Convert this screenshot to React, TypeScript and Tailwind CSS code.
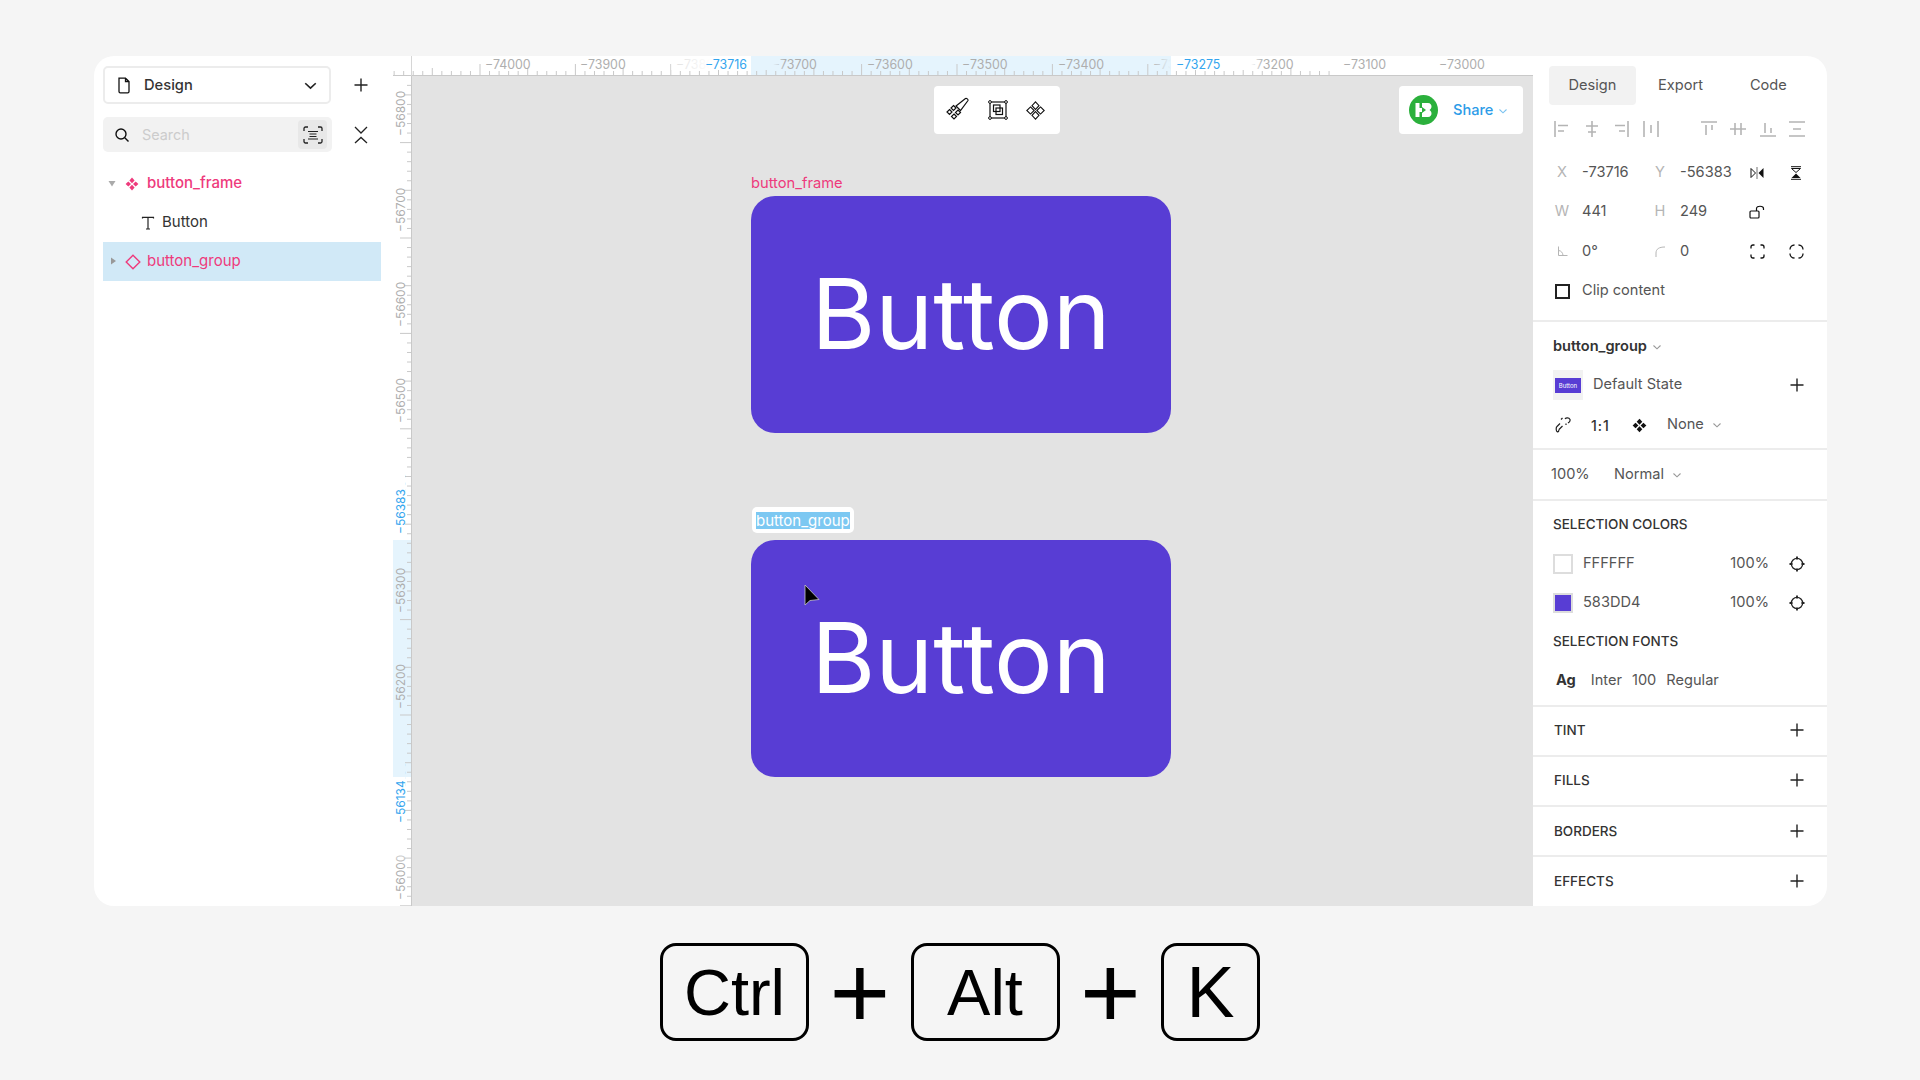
import React from "react";

const PINK = "#ee3a7c";

function Plus() {
  return (
    <svg width="14" height="14" viewBox="0 0 14 14" className="block">
      <path d="M7 0.5V13.5M0.5 7H13.5" stroke="#222" strokeWidth="1.4" />
    </svg>
  );
}
function Chevron({ size = 10, color = "#999" }: { size?: number; color?: string }) {
  return (
    <svg width={size} height={size} viewBox="0 0 10 10" className="block">
      <path d="M1.5 3.5L5 6.8L8.5 3.5" fill="none" stroke={color} strokeWidth="1.1" />
    </svg>
  );
}
function Diamonds({ size = 14, fill = "#111", hollow = false }: { size?: number; fill?: string; hollow?: boolean }) {
  const d = ["M7 0.6L9.6 3.5L7 6.2L4.4 3.5Z", "M7 7.8L9.6 10.5L7 13.4L4.4 10.5Z", "M3.3 4.4L6 7L3.3 9.6L0.6 7Z", "M10.7 4.4L13.4 7L10.7 9.6L8 7Z"];
  return (
    <svg width={size} height={size} viewBox="0 0 14 14" className="block">
      {d.map((p) => (
        <path key={p} d={p} fill={hollow ? "none" : fill} stroke={hollow ? fill : "none"} strokeWidth="0.8" />
      ))}
    </svg>
  );
}
function Target() {
  return (
    <svg width="16" height="16" viewBox="0 0 16 16" className="block">
      <circle cx="8" cy="8" r="5.6" fill="none" stroke="#222" strokeWidth="1.3" />
      <path d="M8 0.5V3.5M8 12.5V15.5M0.5 8H3.5M12.5 8H15.5" stroke="#222" strokeWidth="1.8" />
    </svg>
  );
}
function AlignIcon({ d }: { d: string }) {
  return (
    <svg width="18" height="18" viewBox="0 0 18 18" className="block">
      <path d={d} fill="none" stroke="#b4b4b4" strokeWidth="1.6" />
    </svg>
  );
}

const alignIcons = [
  { c: 1562, d: "M2 1V17M5 5.5H15M5 11H11" },
  { c: 1592, d: "M9 1V17M3 6H15M5 12H13" },
  { c: 1621, d: "M16 1V17M3 5.5H13M7 11H13" },
  { c: 1650, d: "M2 1V17M16 1V17M9 5V13" },
  { c: 1708, d: "M1 2H17M6 5V15M12 5V10" },
  { c: 1738, d: "M1 9H17M6 3V15M12 3V15" },
  { c: 1767, d: "M1 16H17M6 3V13M12 8V13" },
  { c: 1796, d: "M1 2H17M1 16H17M5 9H13" },
];

function TopRuler() {
  const ticks: React.ReactNode[] = [];
  const base = 480 - 412 + 19;
  for (let i = -9; i < 90; i++) {
    const x = base + i * 9.54;
    if (x < 0 || x > 1140) continue;
    const h = i % 10 === 0 ? 12 : i % 5 === 0 ? 8 : 5;
    ticks.push(<line key={i} x1={x} x2={x} y1={20 - h} y2={20} stroke="#c9c9c9" strokeWidth="1" />);
  }
  const labels = [
    [-74000, 485], [-73900, 580], [-73800, 676], [-73700, 772], [-73600, 867], [-73500, 962],
    [-73400, 1058], [-73300, 1153], [-73200, 1248], [-73100, 1343], [-73000, 1439],
  ];
  return (
    <svg width="1140" height="20" className="block">
      <defs>
        <linearGradient id="gw1" x1="0" x2="1" y1="0" y2="0">
          <stop offset="0" stopColor="#fff" stopOpacity="0.6" />
          <stop offset="0.5" stopColor="#fff" stopOpacity="1" />
        </linearGradient>
        <linearGradient id="gw2" x1="0" x2="1" y1="0" y2="0">
          <stop offset="0" stopColor="#fff" stopOpacity="1" />
          <stop offset="1" stopColor="#fff" stopOpacity="0" />
        </linearGradient>
        <linearGradient id="gb1" x1="0" x2="1" y1="0" y2="0">
          <stop offset="0" stopColor="#e5f4fd" stopOpacity="1" />
          <stop offset="1" stopColor="#e5f4fd" stopOpacity="0" />
        </linearGradient>
        <linearGradient id="gb2" x1="0" x2="1" y1="0" y2="0">
          <stop offset="0" stopColor="#e5f4fd" stopOpacity="0" />
          <stop offset="1" stopColor="#e5f4fd" stopOpacity="1" />
        </linearGradient>
      </defs>
      <rect x={751 - 393} y="0" width="420" height="19" fill="#e5f4fd" />
      {ticks}
      <g fontSize="12.4" fill="#aeaeae">
        {labels.map(([v, x]) => (
          <text key={v} x={x - 393} y="12.5">
            {"\u2212" + String(-v)}
          </text>
        ))}
      </g>
      <rect x={671 - 393} y="0" width="80" height="14" fill="url(#gw1)" />
      <rect x={751 - 393} y="0" width="22" height="14" fill="#e5f4fd" />
      <rect x={773 - 393} y="0" width="12" height="14" fill="url(#gb1)" />
      <rect x={1150 - 393} y="0" width="21" height="14" fill="url(#gb2)" />
      <rect x={1171 - 393} y="0" width="80" height="14" fill="#fff" />
      <rect x={1251 - 393} y="0" width="12" height="14" fill="url(#gw2)" />
      <g fontSize="12.4" fill="#33a5ee">
        <text x={747 - 393} y="12.5" textAnchor="end">{"\u221273716"}</text>
        <text x={1176 - 393} y="12.5">{"\u221273275"}</text>
      </g>
      <line x1="0" x2="1140" y1="19.5" y2="19.5" stroke="#c9c9c9" />
      <line x1="18.5" x2="18.5" y1="0" y2="20" stroke="#d6d6d6" />
    </svg>
  );
}

function LeftRuler() {
  const ticks: React.ReactNode[] = [];
  const top = 76;
  for (let i = -7; i < 85; i++) {
    const y = 142.6 + i * 9.54 - top;
    if (y < 0 || y > 830) continue;
    const w = i % 10 === 0 ? 12 : i % 5 === 0 ? 8 : 5;
    ticks.push(<line key={i} x1={19 - w} x2={19} y1={y} y2={y} stroke="#c9c9c9" />);
  }
  const labels = [[56800, 136], [56700, 232], [56600, 327], [56500, 423], [56400, 518], [56300, 613], [56200, 709], [56100, 804], [56000, 900]];
  return (
    <svg width="19" height="830" className="block">
      <defs>
        <linearGradient id="gv" x1="0" x2="0" y1="0" y2="1">
          <stop offset="0" stopColor="#fff" stopOpacity="1" />
          <stop offset="1" stopColor="#fff" stopOpacity="0" />
        </linearGradient>
      </defs>
      <rect x="0" y={540 - top} width="18" height="237" fill="#e5f4fd" />
      {ticks}
      <g fontSize="12" fill="#aeaeae">
        {labels.map(([v, y]) => (
          <text key={v} transform={`translate(11.5 ${y - top}) rotate(-90)`}>
            {"\u2212" + v}
          </text>
        ))}
      </g>
      <rect x="0" y={468 - top} width="12" height={72} fill="#fff" />
      <rect x="0" y={777 - top} width="12" height={63} fill="#fff" />
      <rect x="0" y={840 - top} width="12" height={26} fill="url(#gv)" />
      <rect x="0" y={540 - top} width="12" height={10} fill="#e5f4fd" />
      <rect x="0" y={760 - top} width="12" height={17} fill="#e5f4fd" />
      <g fontSize="12" fill="#33a5ee">
        <text transform={`translate(11.5 ${534 - top}) rotate(-90)`}>{"\u221256383"}</text>
        <text transform={`translate(11.5 ${823 - top}) rotate(-90)`}>{"\u221256134"}</text>
      </g>
      <line x1="18.5" x2="18.5" y1="0" y2="830" stroke="#c9c9c9" />
    </svg>
  );
}

function PurpleButton() {
  return (
    <div className="w-[420px] h-[237px] rounded-[24px] bg-[#583dd4] flex items-center justify-center pb-[2px] text-white text-[98px] leading-none">
      Button
    </div>
  );
}

function Section({ label, extra }: { label: string; extra: string }) {
  return (
    <div className={`${extra} h-[50px] shrink-0 flex items-center justify-between pl-[21px] pr-[23px] border-t-2 border-[#ececec]`}>
      <span className="text-[13.5px] font-medium text-[#333]">{label}</span>
      <Plus />
    </div>
  );
}

function Key({ w, size, children }: { w: string; size: string; children: string }) {
  return (
    <div className={`${w} ${size} h-[98px] border-[3px] border-black rounded-[16px] flex items-center justify-center text-black leading-none`}>
      {children}
    </div>
  );
}

export default function App() {
  return (
    <div className="w-[1920px] h-[1080px] bg-[#f5f5f5] pt-[56px] pl-[94px] overflow-hidden [font-family:Inter,sans-serif]">
      <div className="w-[1733px] h-[850px] rounded-[20px] bg-white flex overflow-hidden">
        {/* Left panel */}
        <div className="w-[299px] shrink-0 pl-[9px] pt-[10px] flex flex-col">
          <div className="flex items-center">
            <div className="w-[228px] h-[38px] border-2 border-[#ececec] rounded-[5px] flex items-center pl-[11px] pr-[11px]">
              <svg width="16" height="17" viewBox="0 0 16 17" className="block shrink-0">
                <path d="M3 1.2H9.5L13 4.5V14.5C13 15.3 12.4 15.8 11.7 15.8H4.3C3.6 15.8 3 15.3 3 14.5Z M9.5 1.2V4.5H13" fill="none" stroke="#111" strokeWidth="1.3" />
              </svg>
              <span className="ml-[12px] text-[14.7px] font-medium text-[#333] flex-1">Design</span>
              <Chevron size={15} color="#222" />
            </div>
            <div className="ml-[23px]"><Plus /></div>
          </div>
          <div className="flex items-center mt-[13px]">
            <div className="w-[229px] h-[35px] bg-[#f2f2f2] rounded-[5px] flex items-center pl-[11px] pr-[5px]">
              <svg width="16" height="16" viewBox="0 0 16 16" className="block shrink-0">
                <circle cx="7" cy="7" r="5" fill="none" stroke="#111" strokeWidth="1.4" />
                <path d="M10.8 10.8L14.5 14.5" stroke="#111" strokeWidth="1.4" />
              </svg>
              <span className="ml-[12px] text-[14.4px] text-[#cccccc] flex-1">Search</span>
              <div className="w-[29px] h-[29px] bg-[#e8e8e8] rounded-[4px] flex items-center justify-center">
                <svg width="20" height="18" viewBox="0 0 20 18" className="block">
                  <path d="M1 5V2.5C1 1.7 1.7 1 2.5 1H5M15 1H17.5C18.3 1 19 1.7 19 2.5V5M19 13V15.5C19 16.3 18.3 17 17.5 17H15M5 17H2.5C1.7 17 1 16.3 1 15.5V13" fill="none" stroke="#222" strokeWidth="1.3" />
                  <path d="M5 5.5H15M6.5 8H13.5M6.5 10.5H13.5M5 13H15" stroke="#222" strokeWidth="1.2" />
                </svg>
              </div>
            </div>
            <div className="ml-[22px]">
              <svg width="14" height="18" viewBox="0 0 14 18" className="block">
                <path d="M1 1L7 7L13 1M1 17L7 11.5L13 17" fill="none" stroke="#222" strokeWidth="1.3" />
              </svg>
            </div>
          </div>
          <div className="w-[278px] mt-[12px] text-[15px]">
            <div className="h-[39px] flex items-center">
              <svg width="10" height="8" viewBox="0 0 10 8" className="block ml-[5px]"><path d="M0.5 1H7.5L4 6.5Z" fill="#aaaaaa" /></svg>
              <div className="ml-[7px]"><Diamonds size={14} fill={PINK} /></div>
              <span className="ml-[8px] font-medium text-[#ee3a7c]">button_frame</span>
            </div>
            <div className="h-[39px] flex items-center pl-[38px]">
              <svg width="14" height="14" viewBox="0 0 14 14" className="block"><path d="M1.5 2.5V1.3H12.5V2.5M7 1.3V13M5 13H9" fill="none" stroke="#222" strokeWidth="1.2" /></svg>
              <span className="ml-[7px] text-[#333]">Button</span>
            </div>
            <div className="h-[39px] flex items-center bg-[#d1e9f7]">
              <svg width="7" height="10" viewBox="0 0 7 10" className="block ml-[7px]"><path d="M1 0.5V7.5L6 4Z" fill="#999" /></svg>
              <div className="ml-[8px]">
                <svg width="16" height="16" viewBox="0 0 16 16" className="block"><path d="M8 1.2L14.8 8L8 14.8L1.2 8Z" fill="none" stroke={PINK} strokeWidth="1.4" /></svg>
              </div>
              <span className="ml-[6px] text-[#ee3a7c]">button_group</span>
            </div>
          </div>
        </div>

        {/* Rulers + canvas */}
        <div className="w-[1140px] shrink-0 flex flex-col">
          <TopRuler />
          <div className="flex flex-1 min-h-0">
            <LeftRuler />
            <div className="relative flex-1 bg-[#e3e3e3]">
              <div className="absolute left-[522px] top-[10px] w-[126px] h-[48px] bg-white rounded-[4px] flex items-center pl-[12px] gap-[18px]">
                <svg width="24" height="26" viewBox="0 0 24 26" className="block shrink-0">
                  <g fill="none" stroke="#111" strokeWidth="1.2">
                    <path d="M3.5 12.5L6 15L3.5 17.5L1 15Z M8 17L10.5 19.5L8 22L5.5 19.5Z M7.5 8.5L10 11L7.5 13.5L5 11Z M12 13L14.5 15.5L12 18L9.5 15.5Z" />
                    <path d="M10 9L19.5 1.5C20.5 0.8 22.5 2.5 22 3.5L14.5 13.5Z" />
                  </g>
                </svg>
                <svg width="20" height="20" viewBox="0 0 20 20" className="block shrink-0">
                  <g fill="none" stroke="#111" strokeWidth="1.2">
                    <rect x="2" y="2" width="16" height="16" />
                    <rect x="5.5" y="5" width="6.5" height="6.5" />
                    <rect x="8" y="8" width="6.5" height="6.5" />
                  </g>
                  <g fill="#fff" stroke="#111">
                    <circle cx="2" cy="2" r="1.4" /><circle cx="18" cy="2" r="1.4" /><circle cx="2" cy="18" r="1.4" /><circle cx="18" cy="18" r="1.4" />
                  </g>
                </svg>
                <Diamonds size={19} hollow />
              </div>
              <div className="absolute left-[987px] top-[10px] w-[124px] h-[48px] bg-white rounded-[4px] flex items-center pl-[10px]">
                <svg width="29" height="30" viewBox="0 0 29 30" className="block shrink-0">
                  <ellipse cx="14.5" cy="15" rx="14.5" ry="15" fill="#2bb03c" />
                  <path d="M6.5 8H19C21.5 8 22.5 10 22.5 11.5C22.5 13 21.8 14.2 20.5 15C21.8 15.8 22.5 17 22.5 18.5C22.5 20 21.5 22 19 22H6.5Z" fill="#fff" />
                  <path d="M13 12L17 15L13 18Z" fill="#2bb03c" />
                  <rect x="10.5" y="8" width="2.5" height="5" fill="#2bb03c" />
                  <rect x="10.5" y="17" width="2.5" height="5" fill="#2bb03c" />
                </svg>
                <span className="ml-[15px] pt-[1px] text-[14.6px] font-medium text-[#2d9ce8]">Share</span>
                <span className="ml-[5px] pt-[1px]"><Chevron color="#7cc3f0" /></span>
              </div>

              <div className="absolute left-[339px] top-[97px] text-[14.7px] leading-[20px] text-[#ee3a7c]">button_frame</div>
              <div className="absolute left-[339px] top-[120px]"><PurpleButton /></div>

              <div className="absolute left-[340px] top-[431px] h-[26px] px-[4px] bg-white rounded-[5px] flex items-center text-[15px] text-white">
                <span className="bg-[#7cc8f2] leading-[17px]">button_group</span>
              </div>
              <div className="absolute left-[339px] top-[464px]"><PurpleButton /></div>

              <svg width="16" height="24" viewBox="0 0 16 24" className="absolute left-[392px] top-[508px]">
                <path d="M1 1V21L6 16.5L15 15.5Z" fill="#000" stroke="#c8c8c8" strokeWidth="0.8" />
              </svg>
            </div>
          </div>
        </div>

        {/* Right panel */}
        <div className="w-[294px] shrink-0 flex flex-col text-[14.6px] text-[#555]">
          <div className="h-[264px] shrink-0 pt-[10px] pl-[16px]">
            <div className="flex items-center h-[39px]">
              <div className="w-[87px] h-[39px] rounded-[4px] bg-[#f2f2f2] flex items-center justify-center">Design</div>
              <span className="ml-[22px]">Export</span>
              <span className="ml-[47px]">Code</span>
            </div>
            <div className="flex items-center h-[18px] mt-[15px] ml-[4px]">
              {alignIcons.map((a, i) => (
                <div key={a.c} className={i === 4 ? "ml-[40px]" : i === 0 ? "" : "ml-[11.5px]"}>
                  <AlignIcon d={a.d} />
                </div>
              ))}
            </div>
            <div className="flex items-center h-[39px] mt-[15px]">
              <span className="w-[26px] mr-[7px] text-center text-[#b5b5b5]">X</span>
              <span className="w-[66px]">-73716</span>
              <span className="w-[24px] mr-[8px] text-center text-[#b5b5b5]">Y</span>
              <span className="w-[62px]">-56383</span>
              <span className="w-[30px] flex justify-center">
                <svg width="14" height="12" viewBox="0 0 14 12" className="block"><path d="M1 1.5V10.5L5.5 6Z" fill="none" stroke="#111" /><path d="M13.5 1V11L8.5 6Z" fill="#111" /><path d="M7 0V12" stroke="#111" strokeWidth="0.6" /></svg>
              </span>
              <span className="w-[30px] ml-[9px] flex justify-center">
                <svg width="12" height="14" viewBox="0 0 12 14" className="block"><path d="M1 0.7H11M1 13.3H11" stroke="#111" /><path d="M1.5 2.5H10.5L6 6.5Z" fill="none" stroke="#111" /><path d="M1.5 12H10.5L6 7.5Z" fill="#111" /></svg>
              </span>
            </div>
            <div className="flex items-center h-[39px] pt-[1px]">
              <span className="w-[26px] mr-[7px] text-center text-[#b5b5b5]">W</span>
              <span className="w-[66px]">441</span>
              <span className="w-[24px] mr-[8px] text-center text-[#b5b5b5]">H</span>
              <span className="w-[62px]">249</span>
              <span className="w-[30px] flex justify-center">
                <svg width="16" height="14" viewBox="0 0 16 14" className="block"><rect x="1" y="6" width="9" height="7" rx="1" fill="none" stroke="#111" strokeWidth="1.2" /><path d="M7.5 6V3.5C7.5 0.5 14.5 0.5 14.5 3.5V5" fill="none" stroke="#111" strokeWidth="1.2" /></svg>
              </span>
            </div>
            <div className="flex items-center h-[39px] pt-[2px]">
              <span className="w-[26px] mr-[7px] flex justify-center">
                <svg width="11" height="11" viewBox="0 0 11 11" className="block"><path d="M1.5 0.5V9.5H10.5M1.5 4.5C4 4.5 6 7 6 9.5" fill="none" stroke="#b5b5b5" /></svg>
              </span>
              <span className="w-[66px]">0°</span>
              <span className="w-[24px] mr-[8px] flex justify-center">
                <svg width="11" height="11" viewBox="0 0 11 11" className="block"><path d="M1 11V7C1 3 4 1 10 1" fill="none" stroke="#b5b5b5" /></svg>
              </span>
              <span className="w-[62px]">0</span>
              <span className="w-[30px] flex justify-center">
                <svg width="15" height="15" viewBox="0 0 15 15" className="block"><path d="M1 4.5V3C1 1.8 1.8 1 3 1H4.5M10.5 1H12C13.2 1 14 1.8 14 3V4.5M14 10.5V12C14 13.2 13.2 14 12 14H10.5M4.5 14H3C1.8 14 1 13.2 1 12V10.5" fill="none" stroke="#111" strokeWidth="1.3" /></svg>
              </span>
              <span className="w-[30px] ml-[9px] flex justify-center">
                <svg width="15" height="15" viewBox="0 0 15 15" className="block"><path d="M1 5.5C1 3 3 1 5.5 1M9.5 1C12 1 14 3 14 5.5M14 9.5C14 12 12 14 9.5 14M5.5 14C3 14 1 12 1 9.5" fill="none" stroke="#111" strokeWidth="1.3" /></svg>
              </span>
            </div>
            <div className="flex items-center h-[39px] pt-[3px]">
              <span className="ml-[6px] w-[15px] h-[15px] border-2 border-[#222] shrink-0" />
              <span className="ml-[12px]">Clip content</span>
            </div>
          </div>

          <div className="h-[128px] shrink-0 border-t-2 border-[#ececec] pl-[20px] pr-[23px]">
            <div className="h-[47px] flex items-center pt-[3px]">
              <span className="font-semibold text-[#333]">button_group</span>
              <span className="ml-[5px]"><Chevron /></span>
            </div>
            <div className="h-[32px] flex items-center">
              <div className="w-[30px] h-[30px] bg-[#f2f2f2] flex items-center justify-center shrink-0">
                <div className="w-[26px] h-[15px] bg-[#583dd4] text-[6px] leading-[15px] text-center text-white">Button</div>
              </div>
              <span className="ml-[10px] flex-1">Default State</span>
              <Plus />
            </div>
            <div className="h-[48px] flex items-center">
              <svg width="16" height="16" viewBox="0 0 16 16" className="block shrink-0 ml-[2px]"><path d="M6 2.5L7.5 1M1.5 10L5 6.5M4 12.5L7.5 9M2.5 15C1 14 1 12 1.5 10M4 12.5C4 14 3.5 14.8 2.5 15M10 2C11 0.5 14 0.5 15 2.5C15.5 4 14.5 5 13 6M11 8V6.5" fill="none" stroke="#222" strokeWidth="1.2" /></svg>
              <span className="ml-[20px] w-[24px] font-medium text-[#333] text-[14px] tracking-[1px]">1:1</span>
              <span className="ml-[17px]"><Diamonds size={15} /></span>
              <span className="ml-[20px]">None</span>
              <span className="ml-[8px]"><Chevron /></span>
            </div>
          </div>

          <div className="h-[51px] shrink-0 border-t-2 border-[#ececec] flex items-center pl-[18px]">
            <span className="w-[63px]">100%</span>
            <span>Normal</span>
            <span className="ml-[8px]"><Chevron /></span>
          </div>

          <div className="h-[206px] shrink-0 border-t-2 border-[#ececec] pl-[20px] pr-[22px] pt-[13px]">
            <div className="h-[20px] flex items-center font-medium text-[13.5px] text-[#333]">SELECTION COLORS</div>
            <div className="h-[39px] mt-[10px] flex items-center">
              <span className="w-[20px] h-[20px] border-2 border-[#dddddd] bg-white shrink-0" />
              <span className="ml-[10px] flex-1">FFFFFF</span>
              <span className="mr-[20px]">100%</span>
              <Target />
            </div>
            <div className="h-[39px] flex items-center">
              <span className="w-[20px] h-[20px] border-2 border-[#dddddd] bg-[#583dd4] shrink-0" />
              <span className="ml-[10px] flex-1">583DD4</span>
              <span className="mr-[20px]">100%</span>
              <Target />
            </div>
            <div className="h-[20px] mt-[9px] flex items-center font-medium text-[13.5px] text-[#333]">SELECTION FONTS</div>
            <div className="h-[39px] mt-[10px] flex items-center">
              <span className="ml-[3px] font-bold text-[#333]">Ag</span>
              <span className="ml-[15px]">Inter</span>
              <span className="ml-[10px]">100</span>
              <span className="ml-[10px]">Regular</span>
            </div>
          </div>

          <Section label="TINT" extra="pb-[2px]" />
          <Section label="FILLS" extra="pb-[2px]" />
          <Section label="BORDERS" extra="pb-[0px]" />
          <Section label="EFFECTS" extra="" />
        </div>
      </div>

      {/* Shortcut */}
      <div className="w-[1733px] flex items-center mt-[37px] pl-[566px] [font-family:'Liberation_Sans',Arial,sans-serif]">
        <Key w="w-[149px]" size="text-[65px]">Ctrl</Key>
        <span className="w-[101.5px] h-[98px] flex items-center justify-center text-[104px] font-normal leading-none text-black">+</span>
        <Key w="w-[149px]" size="text-[65px]">Alt</Key>
        <span className="w-[101.5px] h-[98px] flex items-center justify-center text-[104px] font-normal leading-none text-black">+</span>
        <Key w="w-[99px]" size="text-[72px]">K</Key>
      </div>
    </div>
  );
}
